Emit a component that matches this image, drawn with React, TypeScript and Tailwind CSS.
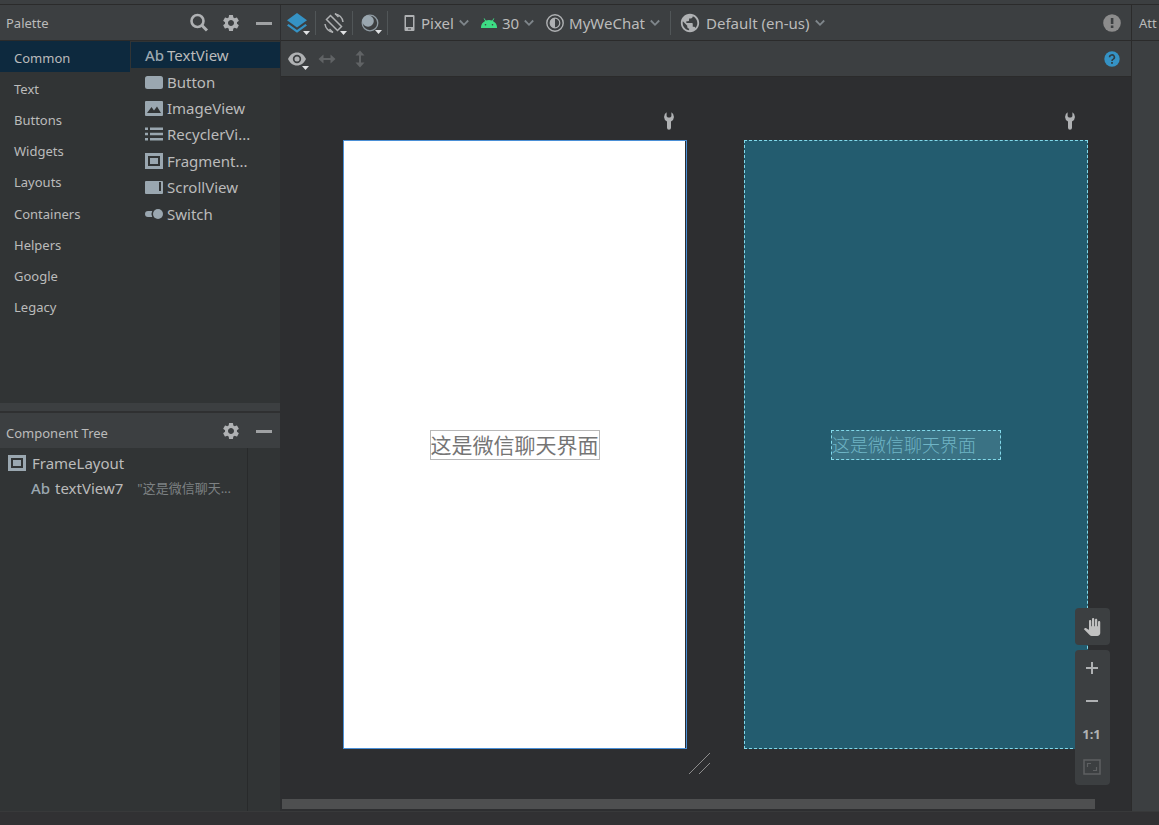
import { useState, type ReactNode } from 'react'
import { MdPanTool, MdPublic, MdSettings } from 'react-icons/md'
import clsx from 'clsx'

const categories = ['Common', 'Text', 'Buttons', 'Widgets', 'Layouts', 'Containers', 'Helpers', 'Google', 'Legacy']

const components = [
  { label: 'TextView', icon: <AbIcon /> },
  { label: 'Button', icon: <ButtonIcon /> },
  { label: 'ImageView', icon: <ImageIcon /> },
  { label: 'RecyclerVi...', icon: <ListIcon /> },
  { label: 'Fragment...', icon: <FrameIcon /> },
  { label: 'ScrollView', icon: <ScrollIcon /> },
  { label: 'Switch', icon: <SwitchIcon /> },
]

function AbIcon() {
  return <span className="w-[18px] text-[15px] leading-4 font-medium text-[#9aa7b0]">Ab</span>
}

function ButtonIcon() {
  return (
    <svg width="18" height="18" fill="#9aa7b0">
      <rect x="0" y="3" width="18" height="13" rx="2.5" />
    </svg>
  )
}

function ImageIcon() {
  return (
    <svg width="18" height="18">
      <rect x="0" y="2" width="18" height="15" rx="1" fill="#9aa7b0" />
      <path d="M2 14 L6.5 8 L9 11.5 L12 7.5 L16 14 Z" fill="#313435" />
    </svg>
  )
}

function ListIcon() {
  return (
    <svg width="18" height="18" fill="#9aa7b0">
      <path d="M0 2.5h3v2.5H0zM5 2.5h13v2.5H5zM0 7.7h3v2.5H0zM5 7.7h13v2.5H5zM0 13h3v2.5H0zM5 13h13v2.5H5z" />
    </svg>
  )
}

function FrameIcon() {
  return (
    <svg width="18" height="18" fill="#9aa7b0">
      <path fillRule="evenodd" d="M0 1h18v16H0zM3 4v10h12V4z" />
      <rect x="5" y="6" width="8" height="6" />
    </svg>
  )
}

function ScrollIcon() {
  return (
    <svg width="18" height="18">
      <rect x="0" y="3" width="18" height="13" rx="1" fill="#9aa7b0" />
      <rect x="14" y="4" width="2" height="9" fill="#313435" />
    </svg>
  )
}

function SwitchIcon() {
  return (
    <svg width="18" height="18" fill="#9aa7b0">
      <path d="M3 6h4.2a6.5 6.5 0 0 0 0 6H3a3 3 0 0 1 0-6z" />
      <circle cx="13" cy="9" r="5" />
    </svg>
  )
}

function SearchIcon() {
  return (
    <svg width="20" height="20" fill="none" stroke="#afb1b3">
      <circle cx="8.5" cy="8" r="6" strokeWidth="2.6" />
      <path d="M12.8 12.3 L18 17.5" strokeWidth="3" />
    </svg>
  )
}

function MinusIcon() {
  return (
    <svg width="16" height="16">
      <rect y="7" width="16" height="3" fill="#9fa1a3" />
    </svg>
  )
}

function LayersIcon() {
  return (
    <svg width="20" height="20" viewBox="0 0 20 20" fill="#3592c4">
      <path d="M10 0 L20 7.2 L10 14.4 L0 7.2z" />
      <path d="M1.6 11 L0 12.4 L10 19.8 L20 12.4 L18.4 11 L10 17z" />
    </svg>
  )
}

function RotateIcon() {
  return (
    <svg width="20" height="20" viewBox="0 0 20 20" fill="none" stroke="#afb1b3" strokeWidth="1.5">
      <path d="M6.5 2.5 L17.5 13.5 L13.5 17.5 L2.5 6.5z" />
      <path d="M11 1 A9.2 9.2 0 0 1 19 9M9 19.2 A9.2 9.2 0 0 1 1 11" />
      <path d="M11 0.5 L14.5 4M9 19.5 L5.5 16" />
    </svg>
  )
}

function MoonIcon() {
  return (
    <svg width="18" height="18" viewBox="0 0 18 18">
      <circle cx="9" cy="9" r="7.8" fill="none" stroke="#8f9ba3" strokeWidth="1.3" />
      <circle cx="7" cy="7" r="5.8" fill="#9aa7b0" />
    </svg>
  )
}

function PhoneIcon() {
  return (
    <svg width="12" height="18" viewBox="0 0 12 18">
      <path fillRule="evenodd" fill="#afb1b3" d="M1.5 1h8a1 1 0 0 1 1 1v14a1 1 0 0 1-1 1h-8a1 1 0 0 1-1-1V2a1 1 0 0 1 1-1zM2 3v10h7V3zM4 14.5v1h3v-1z" />
    </svg>
  )
}

function AndroidIcon() {
  return (
    <svg width="16" height="10" viewBox="0 0 16 10">
      <path d="M0 10 A8 7.6 0 0 1 4.1 3 L2.6 0.6 L3.3 0.2 L4.9 2.6 A8.6 8.6 0 0 1 11.1 2.6 L12.7 0.2 L13.4 0.6 L11.9 3 A8 7.6 0 0 1 16 10z" fill="#3ddc84" />
      <circle cx="4.5" cy="6.7" r="0.8" fill="#3c3f41" />
      <circle cx="11.5" cy="6.7" r="0.8" fill="#3c3f41" />
    </svg>
  )
}

function ThemeIcon() {
  return (
    <svg width="18" height="18" viewBox="0 0 18 18" fill="none" stroke="#afb1b3">
      <circle cx="9" cy="9" r="8.2" strokeWidth="1.4" />
      <circle cx="9" cy="9" r="4.8" strokeWidth="1.2" />
      <path d="M9 4 A5 5 0 0 0 9 14z" fill="#afb1b3" stroke="none" />
    </svg>
  )
}

function ChevronIcon() {
  return (
    <svg width="10" height="8" viewBox="0 0 10 8" fill="none" stroke="#7f868b" strokeWidth="1.8">
      <path d="M0.8 1.5 L5 5.8 L9.2 1.5" />
    </svg>
  )
}

function EyeIcon() {
  return (
    <svg width="18" height="14" viewBox="0 0 18 14">
      <path fillRule="evenodd" fill="#afb1b3" d="M9 0.5C5 0.5 1.6 3.2 0 7c1.6 3.8 5 6.5 9 6.5s7.4-2.7 9-6.5C16.4 3.2 13 0.5 9 0.5zM9 2.8a4.2 4.2 0 1 1 0 8.4a4.2 4.2 0 0 1 0-8.4z" />
      <circle cx="9" cy="7" r="2.5" fill="#afb1b3" />
    </svg>
  )
}

function ArrowsIcon({ vertical }: { vertical?: boolean }) {
  return (
    <svg width="18" height="18" viewBox="0 0 18 18" fill="#606365" className={clsx(vertical && 'rotate-90')}>
      <path d="M0.5 9 L5.5 4.5 V8 H12.5 V4.5 L17.5 9 L12.5 13.5 V10 H5.5 V13.5z" />
    </svg>
  )
}

function WrenchIcon() {
  return (
    <svg width="12" height="18" viewBox="0 0 12 18">
      <path d="M3.6 0.3 A5.3 5.3 0 0 0 4 9.6 V15.8 A2 2 0 0 0 8 15.8 V9.6 A5.3 5.3 0 0 0 8.4 0.3 V4.2 L7.2 5.4 H4.8 L3.6 4.2z" fill="#afb1b3" />
    </svg>
  )
}

function ExclaimIcon() {
  return (
    <svg width="18" height="18" viewBox="0 0 18 18">
      <circle cx="9" cy="9" r="8.8" fill="#8c8c8c" />
      <path d="M7.8 4h2.6v6H7.8zM7.8 11.6h2.6v2.4H7.8z" fill="#3c3f41" />
    </svg>
  )
}

function HelpIcon() {
  return (
    <svg width="16" height="16" viewBox="0 0 16 16">
      <circle cx="8" cy="8" r="7.7" fill="#3592c4" />
      <path d="M5.6 6.3 A2.4 2.3 0 1 1 9.3 8.1 Q8 8.8 8 10" fill="none" stroke="#2f3d46" strokeWidth="1.6" />
      <rect x="7.1" y="11" width="1.8" height="1.8" fill="#2f3d46" />
    </svg>
  )
}

function PlusIcon() {
  return (
    <svg width="14" height="14" fill="#afb1b3">
      <path d="M6 1h2v5h5v2H8v5H6V8H1V6h5z" />
    </svg>
  )
}

function FitIcon() {
  return (
    <svg width="18" height="16" fill="none" stroke="#5e6062">
      <rect x="1" y="1" width="16" height="14" strokeWidth="1.5" />
      <path d="M4.5 8V4.5H8M10 11.5h3.5V8" strokeWidth="1.2" />
    </svg>
  )
}

function MenuArrow() {
  return (
    <svg width="8" height="4" viewBox="0 0 8 4" className="absolute -right-1 -bottom-0.5">
      <path d="M0 0h7L3.5 4z" fill="#dfe1e3" />
    </svg>
  )
}

function IconButton({ label, className, children }: { label: string; className?: string; children: ReactNode }) {
  return (
    <button aria-label={label} className={clsx('flex items-center justify-center shrink-0', className)}>
      {children}
    </button>
  )
}

function Dropdown({ name, value, icon }: { name: string; value: string; icon: ReactNode }) {
  return (
    <label className="flex items-center gap-[5px] shrink-0">
      {icon}
      <select aria-label={name} className="appearance-none field-sizing-content bg-transparent text-[15px] leading-5 outline-none">
        <option>{value}</option>
      </select>
      <ChevronIcon />
    </label>
  )
}

function Separator() {
  return <div className="w-px h-6 shrink-0 bg-[#515658]" />
}

function Palette() {
  const [category, setCategory] = useState('Common')
  const [selected, setSelected] = useState('TextView')

  return (
    <section className="flex-1 flex flex-col">
      <header className="h-9 flex items-center pl-1.5 pr-2 border-b border-[#2b2b2b] bg-[#3c3f41]">
        <h2 className="flex-1 pt-0.5 text-[13px]">Palette</h2>
        <IconButton label="Search" className="mr-3">
          <SearchIcon />
        </IconButton>
        <IconButton label="Settings" className="mr-[15px]">
          <MdSettings size={20} color="#afb1b3" />
        </IconButton>
        <IconButton label="Hide">
          <MinusIcon />
        </IconButton>
      </header>
      <div className="flex-1 flex gap-px">
        <div className="w-[130px] h-[281px] grid grid-rows-9">
          {categories.map((c) => (
            <button
              key={c}
              onClick={() => setCategory(c)}
              className={clsx('pl-3.5 pt-0.5 text-left text-[13px] leading-5', c === category && 'bg-[#0d293e]')}
            >
              {c}
            </button>
          ))}
        </div>
        <div className="flex-1 h-[185px] mt-px grid grid-rows-7">
          {components.map(({ label, icon }) => (
            <button
              key={label}
              onClick={() => setSelected(label)}
              className={clsx('flex items-center gap-1 pl-3.5 text-[15px] leading-5', label === selected && 'bg-[#0d293e]')}
            >
              {icon}
              {label}
            </button>
          ))}
        </div>
      </div>
    </section>
  )
}

function ComponentTree() {
  return (
    <section className="flex-1 flex flex-col">
      <header className="h-[35px] flex items-center pl-1.5 pr-2 bg-[#3c3f41]">
        <h2 className="flex-1 pt-1.5 text-[13px]">Component Tree</h2>
        <IconButton label="Settings" className="mr-[15px]">
          <MdSettings size={20} color="#afb1b3" />
        </IconButton>
        <IconButton label="Hide">
          <MinusIcon />
        </IconButton>
      </header>
      <div className="flex-1 flex">
        <ul className="flex-1 pt-0.5 text-[15px] leading-5">
          <li className="h-[25px] flex items-center gap-1.5 pl-2">
            <FrameIcon />
            FrameLayout
          </li>
          <li className="h-[25px] flex items-center pl-[31px] whitespace-nowrap">
            <AbIcon />
            <span className="ml-1.5">textView7</span>
            <span className="ml-3.5 text-[13px] text-[#7d8183]">"这是微信聊天...</span>
          </li>
        </ul>
        <div className="w-[33px] border-l border-[#282a2b]" />
      </div>
    </section>
  )
}

function Toolbar() {
  return (
    <div className="bg-[#3c3f41]">
      <div className="h-9 flex items-center pl-1.5 pr-2.5 border-b border-[#2b2b2b]">
        <IconButton label="Select design surface" className="relative mr-2">
          <LayersIcon />
          <MenuArrow />
        </IconButton>
        <Separator />
        <IconButton label="Orientation" className="relative mx-2">
          <RotateIcon />
          <MenuArrow />
        </IconButton>
        <Separator />
        <IconButton label="Night mode" className="relative mx-2">
          <MoonIcon />
          <MenuArrow />
        </IconButton>
        <Separator />
        <div className="flex-1 flex items-center gap-3 pl-4">
          <Dropdown name="Device" value="Pixel" icon={<PhoneIcon />} />
          <Dropdown name="API version" value="30" icon={<AndroidIcon />} />
          <Dropdown name="Theme" value="MyWeChat" icon={<ThemeIcon />} />
          <div className="flex items-center gap-2 -ml-0.5">
            <Separator />
            <Dropdown name="Locale" value="Default (en-us)" icon={<MdPublic size={22} color="#afb1b3" />} />
          </div>
        </div>
        <IconButton label="Warnings">
          <ExclaimIcon />
        </IconButton>
      </div>
      <div className="h-9 flex items-center pl-[7px] pr-[11px] border-b border-[#2b2b2b]">
        <IconButton label="View options" className="relative h-[18px] mr-3">
          <EyeIcon />
          <MenuArrow />
        </IconButton>
        <IconButton label="Expand horizontally" className="mr-[15px]">
          <ArrowsIcon />
        </IconButton>
        <IconButton label="Expand vertically">
          <ArrowsIcon vertical />
        </IconButton>
        <IconButton label="Help" className="ml-auto">
          <HelpIcon />
        </IconButton>
      </div>
    </div>
  )
}

function DesignSurface() {
  return (
    <div className="relative flex-1 flex flex-col bg-[#2d2e30]">
      <div className="flex-1 flex items-start gap-[57px] pt-[35px] pl-[62px] pr-[43px]">
        <div className="flex-1">
          <div className="flex justify-end h-7 pr-3">
            <WrenchIcon />
          </div>
          <div className="aspect-[344/609] flex border border-[#4a8fd6]">
            <div className="flex-1 flex items-center justify-center mr-px bg-white">
              <span className="border border-[#b8b8b8] text-[21px] leading-7 text-[#757575]">这是微信聊天界面</span>
            </div>
          </div>
          <svg width="22" height="22" stroke="#8c8c8c" className="ml-auto -mr-6 mt-1">
            <path d="M0 21 L21 0M10 21 L21 10" />
          </svg>
        </div>
        <div className="flex-1">
          <div className="flex justify-end h-7 pr-3">
            <WrenchIcon />
          </div>
          <div className="aspect-[344/609] flex items-center justify-center border border-dashed border-[#82d9ea] bg-[#235c6f]">
            <span className="w-[170px] border border-dashed border-[#82d9ea] bg-[#3a7284] text-[18px] leading-7 font-light text-[#6fb5c6]">
              这是微信聊天界面
            </span>
          </div>
        </div>
      </div>
      <div className="h-2.5 ml-px mr-9 mb-0.5 bg-[#4e4f50]" />

      <div className="absolute right-[21px] bottom-[26px] w-[35px] flex flex-col gap-[5px]">
        <IconButton label="Pan" className="h-[37px] pr-0.5 rounded bg-[#3c3f41]">
          <MdPanTool size={18} color="#c0c0c0" />
        </IconButton>
        <div className="grid grid-rows-4 h-[135px] py-0.5 pr-0.5 rounded bg-[#3c3f41]">
          <IconButton label="Zoom in">
            <PlusIcon />
          </IconButton>
          <IconButton label="Zoom out">
            <svg width="14" height="14">
              <rect x="1" y="6" width="12" height="2" fill="#afb1b3" />
            </svg>
          </IconButton>
          <button className="text-[13px] leading-4 font-bold text-[#afb1b3]">1:1</button>
          <IconButton label="Zoom to fit">
            <FitIcon />
          </IconButton>
        </div>
      </div>
    </div>
  )
}

export default function App() {
  return (
    <div className="min-h-screen flex flex-col bg-[#313435] text-[#bbbbbb] font-['Noto_Sans','Noto_Sans_CJK_SC',sans-serif]">
      <div className="h-[5px] border-b border-[#2b2b2b] bg-[#3c3f41]" />
      <main className="flex-1 flex">
        <aside className="w-[281px] shrink-0 flex flex-col border-r border-[#2d2e30]">
          <Palette />
          <div className="h-2.5 border-b-2 border-[#2f3031] bg-[#3c3f41]" />
          <ComponentTree />
        </aside>
        <div className="flex-1 min-w-0 flex flex-col">
          <Toolbar />
          <DesignSurface />
        </div>
        <aside className="w-7 shrink-0 overflow-hidden border-l border-[#2b2b2b] bg-[#3c3f41]">
          <h2 className="h-9 flex items-center pt-0.5 pl-[7px] border-b border-[#2b2b2b] text-[13px]">Att</h2>
        </aside>
      </main>
      <footer className="h-3.5 border-t border-[#38393a] bg-[#313133]" />
    </div>
  )
}
